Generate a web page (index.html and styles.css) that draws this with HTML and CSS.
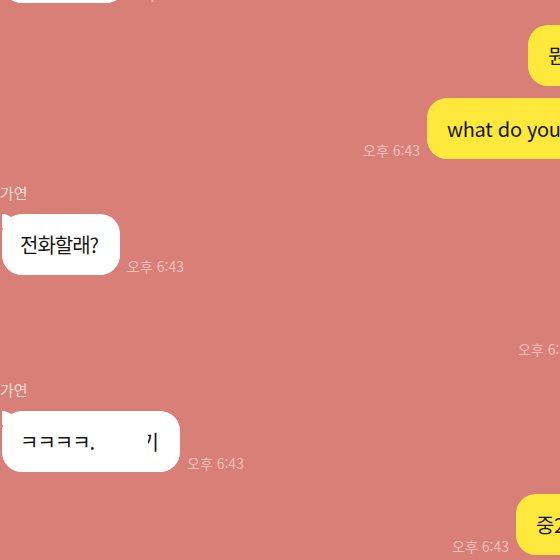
FILE: index.html
```html
<!DOCTYPE html>
<html lang="ko">
<head>
<meta charset="utf-8">
<link rel="stylesheet" href="styles.css">
</head>
<body>
<div class="chat">
  <div class="row left">
    <div class="bubble w-top">그래서 뭐해</div>
    <span class="time">오후 6:43</span>
  </div>

  <div class="row right gap-group">
    <div class="bubble w-r1">뭔 소리야</div>
  </div>
  <div class="row right gap-same">
    <span class="time">오후 6:43</span>
    <div class="bubble w-r2">what do you mean?</div>
  </div>

  <div class="name">가연</div>
  <div class="row left">
    <div class="bubble ear">전화할래?</div>
    <span class="time">오후 6:43</span>
  </div>

  <div class="row right gap-group">
    <span class="time">오후 6:43</span>
    <div class="bubble w-r3">아니</div>
  </div>

  <div class="name name-tight">가연</div>
  <div class="row left">
    <div class="bubble ear w-l2"><span>ㅋㅋㅋㅋ.</span><span class="blank"></span><span class="cut">기</span></div>
    <span class="time">오후 6:43</span>
  </div>

  <div class="row right gap-group">
    <span class="time">오후 6:43</span>
    <div class="bubble w-r4">중2병이야</div>
  </div>
</div>
</body>
</html>
```
FILE: styles.css
```css
* { box-sizing: border-box; }
html, body {
  margin: 0;
  height: 560px;
  overflow: hidden;
  background: #d88078;
}
body {
  font-family: "Noto Sans CJK KR", "Noto Sans", sans-serif;
}
.chat {
  width: 680px;
  margin-top: -58px;
  display: flex;
  flex-direction: column;
}
.row {
  display: flex;
  align-items: flex-end;
  gap: 7px;
}
.row.left { padding-left: 2px; }
.row.right { justify-content: flex-end; padding-right: 12px; }
.gap-group { margin-top: 22px; }
.gap-same { margin-top: 12px; }
.bubble {
  position: relative;
  height: 61px;
  display: flex;
  align-items: center;
  padding: 0 22px 0 18px;
  border-radius: 20px;
  font-size: 20px;
  letter-spacing: -1px;
  white-space: nowrap;
  color: #161616;
  flex-shrink: 0;
}
.left .bubble { background: #ffffff; }
.right .bubble { background: #fde83b; padding-left: 20px; letter-spacing: -0.3px; }
.ear::before {
  content: "";
  position: absolute;
  left: 0;
  top: 0;
  width: 14px;
  height: 14px;
  background: #ffffff;
  border-top-right-radius: 14px;
}
.w-top { width: 124px; color: transparent; }
.w-r1 { width: 140px; }
.w-r2 { width: 241px; }
.w-r3 { width: 86px; }
.w-r4 { width: 152px; }
.w-l2 { width: 178px; }
.blank { display: inline-block; width: 52px; }
.cut { position: relative; display: inline-block; }
.cut::before {
  content: "";
  position: absolute;
  left: 0;
  top: 0;
  width: 7px;
  height: 100%;
  background: #ffffff;
}
.time {
  font-size: 14px;
  line-height: 16px;
  color: #f4bdb7;
  white-space: nowrap;
  margin-bottom: 1px;
}
.name {
  margin-top: 23px;
  margin-bottom: 10px;
  font-size: 15px;
  line-height: 22px;
  color: #f9dcd8;
}
.name-tight { margin-top: 21px; }
```
